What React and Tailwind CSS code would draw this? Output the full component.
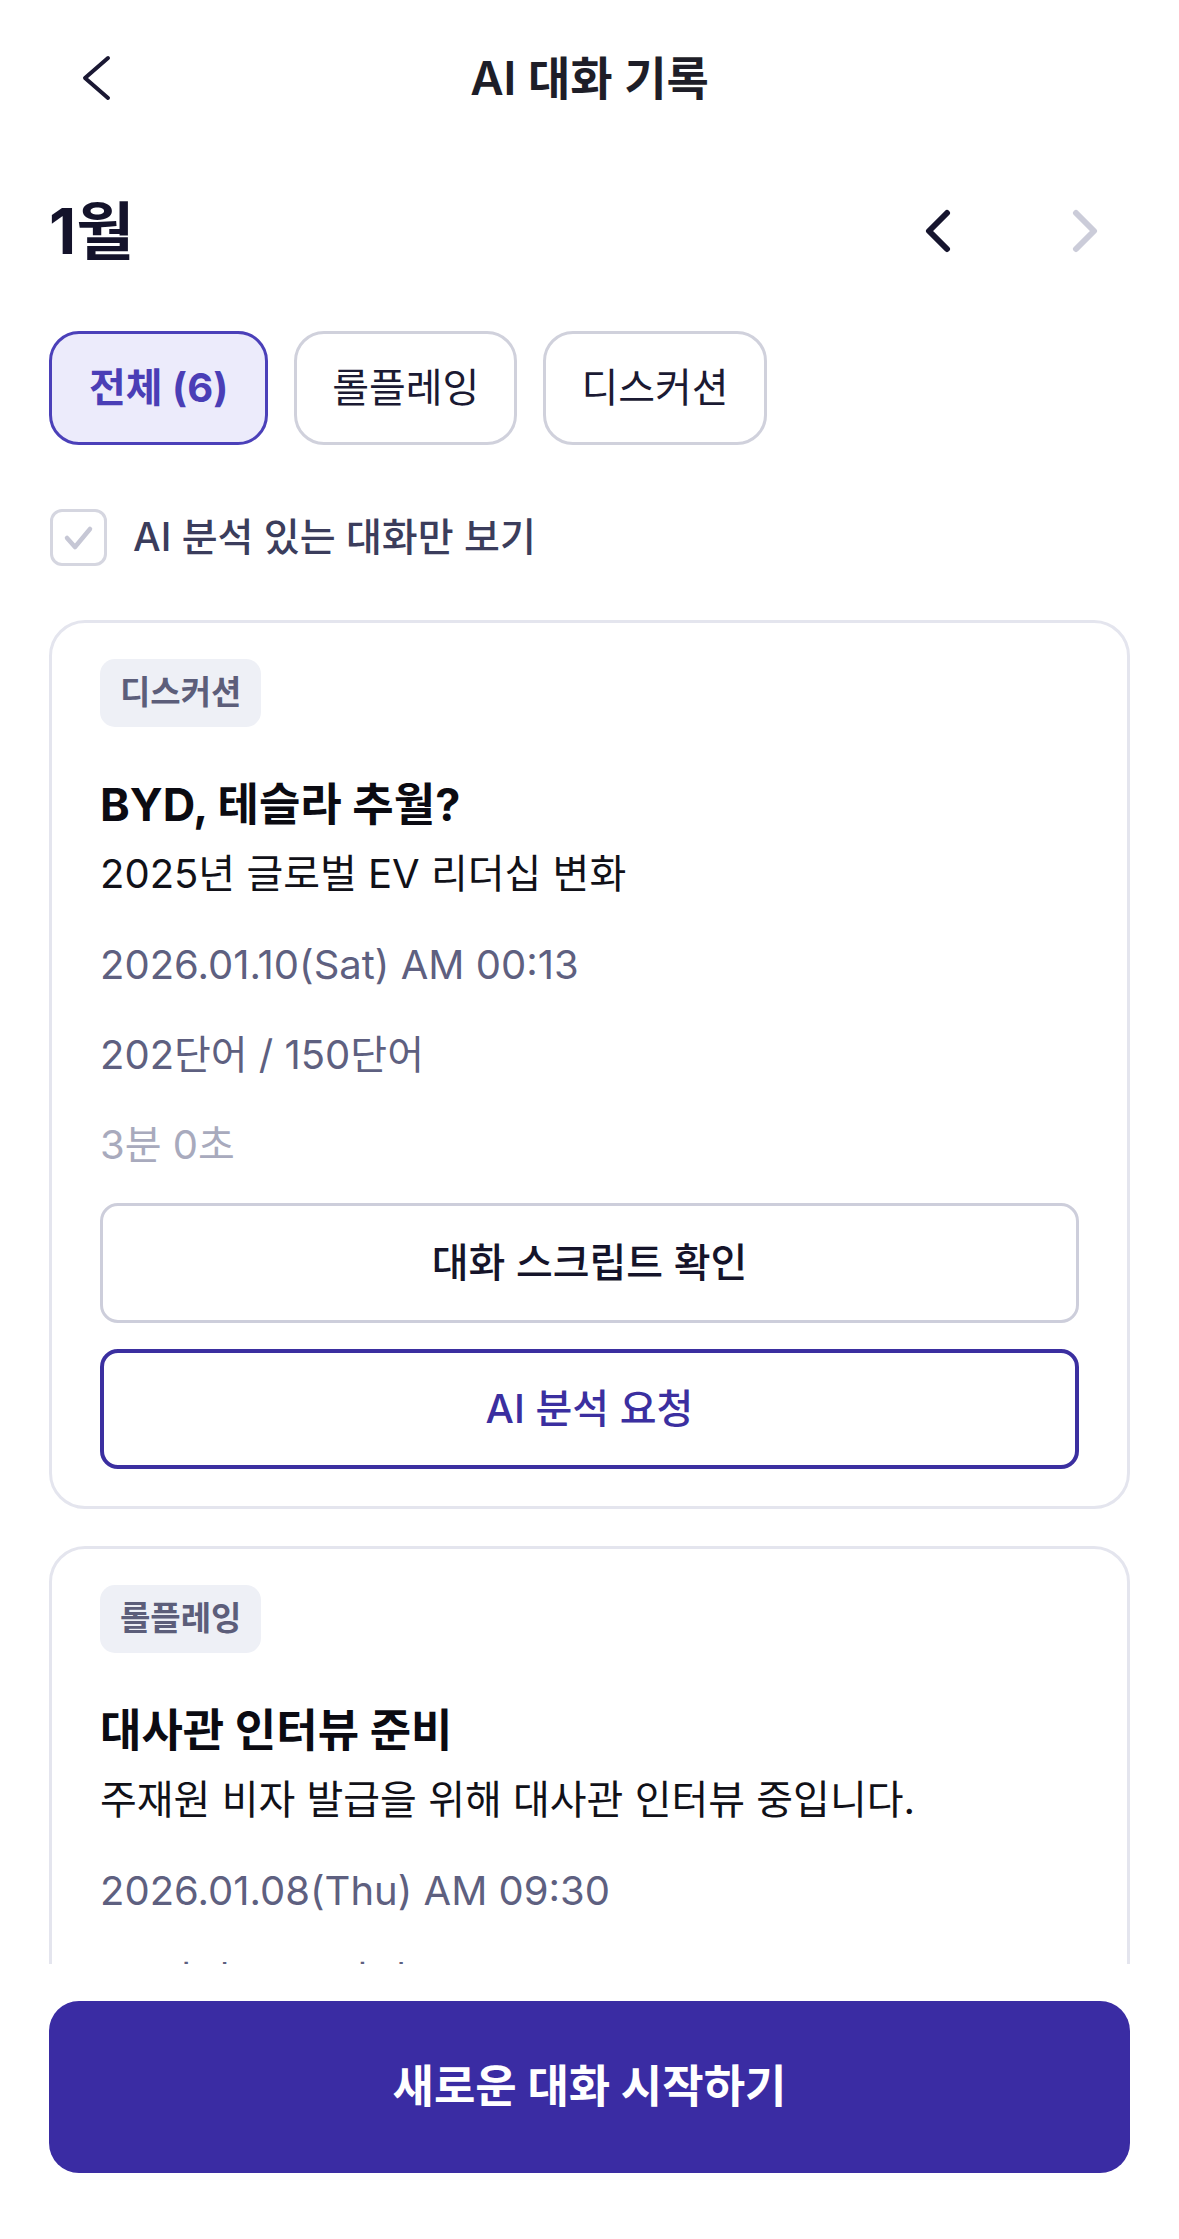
import React, { useState } from 'react';

const FONT = "font-[family-name:Inter,'Noto_Sans_CJK_KR',sans-serif]";

const ChevronLeft = ({ className = '', stroke = '#1a1833', width = 4 }) => (
  <svg viewBox="0 0 30 46" className={className} fill="none">
    <polyline points="27,3 4,23 27,43" stroke={stroke} strokeWidth={width} strokeLinecap="round" strokeLinejoin="round" />
  </svg>
);

const MonthChevron = ({ dir = 'left', stroke }) => (
  <svg viewBox="0 0 28 44" className="w-[28px] h-[44px]" fill="none">
    {dir === 'left' ? (
      <polyline points="23,4 5,22 23,40" stroke={stroke} strokeWidth="6" strokeLinecap="round" strokeLinejoin="round" />
    ) : (
      <polyline points="5,4 23,22 5,40" stroke={stroke} strokeWidth="6" strokeLinecap="round" strokeLinejoin="round" />
    )}
  </svg>
);

const conversations = [
  {
    type: '디스커션',
    title: 'BYD, 테슬라 추월?',
    subtitle: '2025년 글로벌 EV 리더십 변화',
    date: '2026.01.10(Sat) AM 00:13',
    words: '202단어 / 150단어',
    duration: '3분 0초',
  },
  {
    type: '롤플레잉',
    title: '대사관 인터뷰 준비',
    subtitle: '주재원 비자 발급을 위해 대사관 인터뷰 중입니다.',
    date: '2026.01.08(Thu) AM 09:30',
    words: '110단어 / 150단어',
    duration: '2분 41초',
  },
];

const filters = ['전체 (6)', '롤플레잉', '디스커션'];

const ConversationCard = ({ item }) => (
  <div className="border-[3px] border-[#e4e5ee] rounded-[36px] px-[48px] pt-[36px] pb-[37px] bg-white">
    {/* Type tag */}
    <span className="inline-flex items-center h-[68px] px-[20px] rounded-[15px] bg-[#eef0f6] text-[33px] font-semibold text-[#5c5e7a]">
      {item.type}
    </span>

    <h2 className="mt-[48px] text-[45px] leading-[60px] font-bold text-[#0b0b12]">{item.title}</h2>
    <p className="mt-[12px] text-[40px] leading-[54px] text-[#111118]">{item.subtitle}</p>

    <p className="mt-[37px] text-[40px] leading-[54px] text-[#5e6080]">{item.date}</p>
    <p className="mt-[36px] text-[40px] leading-[54px] text-[#5e6080]">{item.words}</p>
    <p className="mt-[36px] text-[40px] leading-[54px] text-[#a8aabd]">{item.duration}</p>

    <button
      type="button"
      className="mt-[31px] w-full h-[120px] flex items-center justify-center border-[3px] border-[#cdcedb] rounded-[18px] text-[40px] font-medium text-[#15142a]"
    >
      대화 스크립트 확인
    </button>
    <button
      type="button"
      className="mt-[26px] w-full h-[120px] flex items-center justify-center border-[4px] border-[#3b2fa0] rounded-[18px] text-[40px] font-medium text-[#3b2fa0]"
    >
      AI 분석 요청
    </button>
  </div>
);

export default function App() {
  const [active, setActive] = useState(0);
  const [onlyAnalyzed, setOnlyAnalyzed] = useState(false);

  return (
    <div className={`${FONT} w-[1179px] h-[2239px] bg-white flex flex-col overflow-hidden`}>
      {/* Header */}
      <header className="h-[156px] shrink-0 px-[49px] grid grid-cols-[1fr_auto_1fr] items-center">
        <button type="button" className="justify-self-start ml-[32px]">
          <ChevronLeft className="w-[30px] h-[46px]" />
        </button>
        <h1 className="text-[46px] font-semibold text-[#1e1e28]">AI 대화 기록</h1>
        <div />
      </header>

      {/* Month selector */}
      <div className="h-[150px] shrink-0 px-[49px] flex items-center justify-between">
        <span className="text-[63px] font-bold text-[#14132b]">1월</span>
        <div className="flex items-center gap-[57px]">
          <button type="button" className="w-[90px] h-[90px] flex items-center justify-center">
            <MonthChevron dir="left" stroke="#16152e" />
          </button>
          <button type="button" className="w-[90px] h-[90px] flex items-center justify-center">
            <MonthChevron dir="right" stroke="#cbccd9" />
          </button>
        </div>
      </div>

      {/* Filter chips */}
      <div className="mt-[25px] shrink-0 px-[49px] flex gap-[26px]">
        {filters.map((label, i) => (
          <button
            key={label}
            type="button"
            onClick={() => setActive(i)}
            className={
              i === active
                ? 'h-[114px] px-[37px] rounded-[30px] border-[3px] border-[#4b40b9] bg-[#ecebfb] text-[40px] font-bold text-[#4a3eb6]'
                : 'h-[114px] px-[35px] rounded-[30px] border-[3px] border-[#d0d1dc] bg-white text-[40px] text-[#1b1a33]'
            }
          >
            {label}
          </button>
        ))}
      </div>

      {/* AI analysis filter */}
      <label className="mt-[63px] shrink-0 px-[50px] flex items-center gap-[26px] cursor-pointer">
        <span
          onClick={() => setOnlyAnalyzed(!onlyAnalyzed)}
          className="w-[57px] h-[57px] rounded-[12px] border-[3px] border-[#d5d6e0] flex items-center justify-center"
        >
          <svg viewBox="0 0 51 51" className="w-[51px] h-[51px]" fill="none">
            <polyline points="14,26 22,35 37,17" stroke={onlyAnalyzed ? '#3b2fa0' : '#c6c7d5'} strokeWidth="4.5" strokeLinecap="round" strokeLinejoin="round" />
          </svg>
        </span>
        <span className="text-[39px] font-medium text-[#3b3d5c]">AI 분석 있는 대화만 보기</span>
      </label>

      {/* Conversation list */}
      <div className="mt-[53px] flex-1 min-h-0 overflow-hidden px-[49px] flex flex-col gap-[37px]">
        {conversations.map((item) => (
          <ConversationCard key={item.date} item={item} />
        ))}
      </div>

      {/* Bottom CTA */}
      <div className="h-[275px] shrink-0 px-[49px] pt-[37px] bg-white">
        <button
          type="button"
          className="w-full h-[172px] rounded-[30px] bg-[#3a2ca3] text-white text-[45px] font-bold"
        >
          새로운 대화 시작하기
        </button>
      </div>
    </div>
  );
}
